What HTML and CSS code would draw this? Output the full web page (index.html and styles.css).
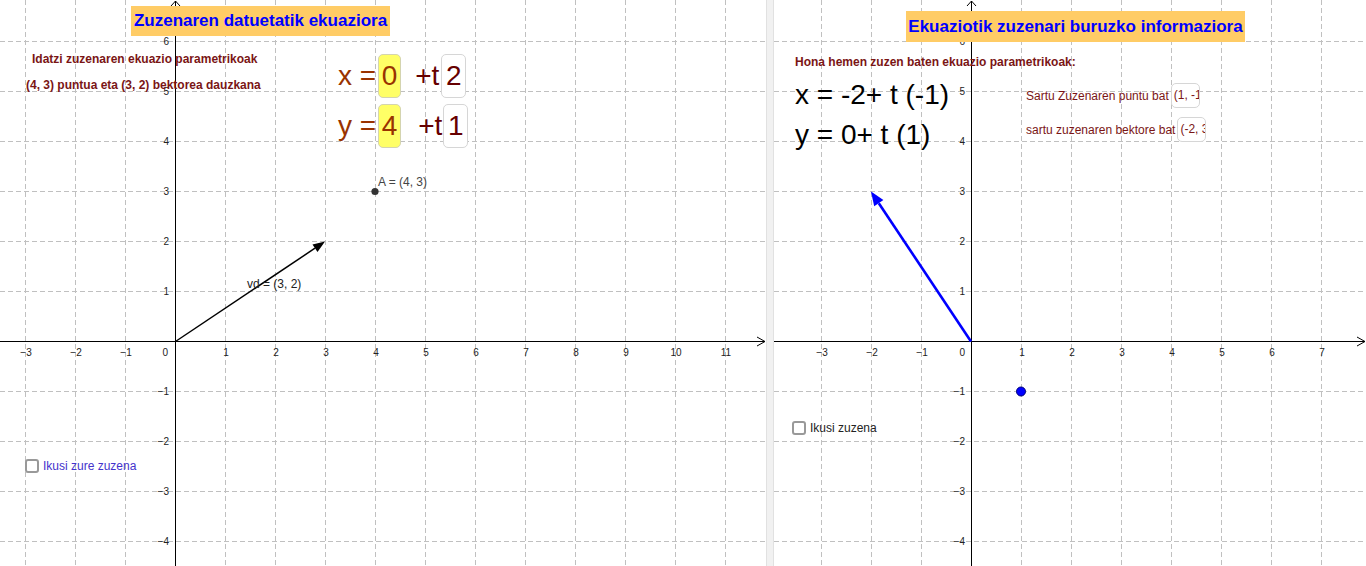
FILE: index.html
```html
<!DOCTYPE html>
<html lang="eu">
<head>
<meta charset="utf-8">
<title>Zuzenaren ekuazioak</title>
<link rel="stylesheet" href="styles.css">
</head>
<body>
<div class="app">
  <section class="panel panel-left">
    <svg class="graph" width="766" height="566" viewBox="0 0 766 566">
      <g class="grid">
        <line x1="25.5" y1="0" x2="25.5" y2="566"/>
        <line x1="75.5" y1="0" x2="75.5" y2="566"/>
        <line x1="125.5" y1="0" x2="125.5" y2="566"/>
        <line x1="225.5" y1="0" x2="225.5" y2="566"/>
        <line x1="275.5" y1="0" x2="275.5" y2="566"/>
        <line x1="325.5" y1="0" x2="325.5" y2="566"/>
        <line x1="375.5" y1="0" x2="375.5" y2="566"/>
        <line x1="425.5" y1="0" x2="425.5" y2="566"/>
        <line x1="475.5" y1="0" x2="475.5" y2="566"/>
        <line x1="525.5" y1="0" x2="525.5" y2="566"/>
        <line x1="575.5" y1="0" x2="575.5" y2="566"/>
        <line x1="625.5" y1="0" x2="625.5" y2="566"/>
        <line x1="675.5" y1="0" x2="675.5" y2="566"/>
        <line x1="725.5" y1="0" x2="725.5" y2="566"/>
        <line x1="0" y1="41.5" x2="766" y2="41.5"/>
        <line x1="0" y1="91.5" x2="766" y2="91.5"/>
        <line x1="0" y1="141.5" x2="766" y2="141.5"/>
        <line x1="0" y1="191.5" x2="766" y2="191.5"/>
        <line x1="0" y1="241.5" x2="766" y2="241.5"/>
        <line x1="0" y1="291.5" x2="766" y2="291.5"/>
        <line x1="0" y1="391.5" x2="766" y2="391.5"/>
        <line x1="0" y1="441.5" x2="766" y2="441.5"/>
        <line x1="0" y1="491.5" x2="766" y2="491.5"/>
        <line x1="0" y1="541.5" x2="766" y2="541.5"/>
      </g>
      <g class="axes">
        <line x1="0" y1="341.5" x2="765" y2="341.5"/>
        <polyline class="arrow" points="757,337 765,341.5 757,346"/>
        <line x1="175.5" y1="1" x2="175.5" y2="566"/>
        <polyline class="arrow" points="171,6 175.5,1 180,6"/>
      </g>
      <g class="ticks-x">
        <text x="26" y="356">−3</text>
        <text x="76" y="356">−2</text>
        <text x="126" y="356">−1</text>
        <text x="226" y="356">1</text>
        <text x="276" y="356">2</text>
        <text x="326" y="356">3</text>
        <text x="376" y="356">4</text>
        <text x="426" y="356">5</text>
        <text x="476" y="356">6</text>
        <text x="526" y="356">7</text>
        <text x="576" y="356">8</text>
        <text x="626" y="356">9</text>
        <text x="676" y="356">10</text>
        <text x="726" y="356">11</text>
      </g>
      <g class="ticks-y">
        <text x="168" y="356">0</text>
        <text x="169" y="45">6</text>
        <text x="169" y="95">5</text>
        <text x="169" y="145">4</text>
        <text x="169" y="195">3</text>
        <text x="169" y="245">2</text>
        <text x="169" y="295">1</text>
        <text x="169" y="395">−1</text>
        <text x="169" y="445">−2</text>
        <text x="169" y="495">−3</text>
        <text x="169" y="545">−4</text>
      </g>
      <line class="vec" x1="175.5" y1="341.5" x2="315" y2="248.2"/>
      <polygon class="vec-head" points="325,241.5 317.5,251.9 312.5,244.4"/>
      <text class="obj-label" x="247" y="288">vd = (3, 2)</text>
      <circle class="pt" cx="375" cy="191.5" r="3.6"/>
      <text class="obj-label obj-label-a" x="378" y="186">A = (4, 3)</text>
    </svg>

    <div class="title title-left">Zuzenaren datuetatik ekuaziora</div>
    <p class="note note-1">Idatzi zuzenaren ekuazio parametrikoak</p>
    <p class="note note-2">(4, 3) puntua eta (3, 2) bektorea dauzkana</p>

    <div class="eq-left">
      <div class="eq-row">
        <span class="eq-lhs">x =</span>
        <span class="box box-y">0</span>
        <span class="eq-plus">+t</span>
        <span class="box box-w">2</span>
      </div>
      <div class="eq-row eq-row-2">
        <span class="eq-lhs">y =</span>
        <span class="box box-y">4</span>
        <span class="eq-plus">+t</span>
        <span class="box box-w">1</span>
      </div>
    </div>

    <label class="check check-left"><span class="cb"></span><span class="check-text">Ikusi zure zuzena</span></label>
  </section>

  <div class="divider"></div>

  <section class="panel panel-right">
    <svg class="graph" width="592" height="566" viewBox="0 0 592 566">
      <g class="grid">
        <line x1="47.5" y1="0" x2="47.5" y2="566"/>
        <line x1="97.5" y1="0" x2="97.5" y2="566"/>
        <line x1="147.5" y1="0" x2="147.5" y2="566"/>
        <line x1="247.5" y1="0" x2="247.5" y2="566"/>
        <line x1="297.5" y1="0" x2="297.5" y2="566"/>
        <line x1="347.5" y1="0" x2="347.5" y2="566"/>
        <line x1="397.5" y1="0" x2="397.5" y2="566"/>
        <line x1="447.5" y1="0" x2="447.5" y2="566"/>
        <line x1="497.5" y1="0" x2="497.5" y2="566"/>
        <line x1="547.5" y1="0" x2="547.5" y2="566"/>
        <line x1="0" y1="41.5" x2="592" y2="41.5"/>
        <line x1="0" y1="91.5" x2="592" y2="91.5"/>
        <line x1="0" y1="141.5" x2="592" y2="141.5"/>
        <line x1="0" y1="191.5" x2="592" y2="191.5"/>
        <line x1="0" y1="241.5" x2="592" y2="241.5"/>
        <line x1="0" y1="291.5" x2="592" y2="291.5"/>
        <line x1="0" y1="391.5" x2="592" y2="391.5"/>
        <line x1="0" y1="441.5" x2="592" y2="441.5"/>
        <line x1="0" y1="491.5" x2="592" y2="491.5"/>
        <line x1="0" y1="541.5" x2="592" y2="541.5"/>
      </g>
      <g class="axes">
        <line x1="0" y1="341.5" x2="591" y2="341.5"/>
        <polyline class="arrow" points="583,337 591,341.5 583,346"/>
        <line x1="197.5" y1="1" x2="197.5" y2="566"/>
        <polyline class="arrow" points="193,6 197.5,1 202,6"/>
      </g>
      <g class="ticks-x">
        <text x="48" y="356">−3</text>
        <text x="98" y="356">−2</text>
        <text x="148" y="356">−1</text>
        <text x="248" y="356">1</text>
        <text x="298" y="356">2</text>
        <text x="348" y="356">3</text>
        <text x="398" y="356">4</text>
        <text x="448" y="356">5</text>
        <text x="498" y="356">6</text>
        <text x="548" y="356">7</text>
      </g>
      <g class="ticks-y">
        <text x="191" y="356">0</text>
        <text x="191" y="45">6</text>
        <text x="191" y="95">5</text>
        <text x="191" y="145">4</text>
        <text x="191" y="195">3</text>
        <text x="191" y="245">2</text>
        <text x="191" y="295">1</text>
        <text x="191" y="395">−1</text>
        <text x="191" y="445">−2</text>
        <text x="191" y="495">−3</text>
        <text x="191" y="545">−4</text>
      </g>
      <line class="vec-blue" x1="197" y1="341.5" x2="104.8" y2="203.2"/>
      <polygon class="vec-blue-head" points="97,191.5 109.4,200.1 100.2,206.2"/>
      <circle class="pt-blue" cx="247" cy="391.5" r="4.5"/>
    </svg>

    <div class="title title-right">Ekuaziotik zuzenari buruzko informaziora</div>
    <p class="note note-3">Hona hemen zuzen baten ekuazio parametrikoak:</p>

    <div class="eq-right">
      <div class="eq-line">x = -2+ t (-1)</div>
      <div class="eq-line">y = 0+ t (1)</div>
    </div>

    <div class="prompt-row prompt-1">
      <span class="prompt">Sartu Zuzenaren puntu bat</span>
      <span class="inbox">(1, -1)</span>
    </div>
    <div class="prompt-row prompt-2">
      <span class="prompt">sartu zuzenaren bektore bat</span>
      <span class="inbox">(-2, 3)</span>
    </div>

    <label class="check check-right"><span class="cb"></span><span class="check-text">Ikusi zuzena</span></label>
  </section>
</div>
</body>
</html>
```

FILE: styles.css
```css
html, body {
  margin: 0;
  padding: 0;
  background: #ffffff;
}

body {
  font-family: "Liberation Sans", Arial, sans-serif;
  overflow: hidden;
}

.app {
  display: flex;
  width: 1366px;
  height: 566px;
}

.panel {
  position: relative;
  height: 566px;
  overflow: hidden;
  background: #ffffff;
}

.panel-left {
  width: 766px;
  flex: 0 0 766px;
}

.panel-right {
  flex: 1 1 auto;
}

.divider {
  flex: 0 0 8px;
  box-sizing: border-box;
  background: #f1f1f1;
  border-left: 1px solid #e1e1e1;
  border-right: 1px solid #e1e1e1;
}

.graph {
  display: block;
}

.grid line {
  stroke: #c0c0c0;
  stroke-width: 1;
  stroke-dasharray: 5 3;
}

.axes line {
  stroke: #000000;
  stroke-width: 1;
}

.axes .arrow {
  fill: none;
  stroke: #000000;
  stroke-width: 1;
}

.graph text {
  font-family: "Liberation Sans", Arial, sans-serif;
  font-size: 10px;
  fill: #222222;
}

.ticks-x text {
  text-anchor: middle;
}

.ticks-y text {
  text-anchor: end;
}

.graph .obj-label {
  font-size: 12px;
  fill: #222222;
}

.graph .obj-label-a {
  fill: #444444;
}

.vec {
  stroke: #000000;
  stroke-width: 1.5;
}

.vec-head {
  fill: #000000;
}

.pt {
  fill: #333333;
}

.vec-blue {
  stroke: #0000ff;
  stroke-width: 2.6;
}

.vec-blue-head {
  fill: #0000ff;
}

.pt-blue {
  fill: #0000ff;
  stroke: #00007a;
  stroke-width: 1;
}

.title {
  position: absolute;
  background: #ffcc66;
  color: #0000ff;
  font-weight: bold;
  font-size: 17px;
  text-align: center;
  white-space: nowrap;
}

.title-left {
  left: 131px;
  top: 6px;
  width: 259px;
  height: 30px;
  line-height: 30px;
}

.title-right {
  left: 132px;
  top: 11px;
  width: 339px;
  height: 31px;
  line-height: 31px;
}

.note {
  position: absolute;
  margin: 0;
  font-size: 12px;
  font-weight: bold;
  line-height: 14px;
  color: #7a1515;
  white-space: nowrap;
}

.note-1 { left: 32px; top: 52px; }
.note-2 { left: 26px; top: 78px; }
.note-3 { left: 21px; top: 55px; }

.eq-left {
  position: absolute;
  left: 338px;
  top: 54px;
  display: flex;
  flex-direction: column;
  gap: 6px;
  font-size: 28px;
}

.eq-row {
  display: flex;
  align-items: center;
  height: 44px;
}

.eq-lhs {
  color: #993300;
  white-space: pre;
}

.eq-plus {
  color: #660000;
  margin-left: 14px;
}

.eq-row-2 .eq-plus {
  margin-left: 17px;
}

.box {
  box-sizing: border-box;
  height: 44px;
  display: flex;
  align-items: center;
  justify-content: center;
  border-radius: 5px;
}

.box-y {
  width: 23px;
  margin-left: 2px;
  background: #ffff66;
  border: 1px solid #d4d4b0;
  color: #993300;
}

.box-w {
  width: 25px;
  margin-left: 2px;
  background: #ffffff;
  border: 1px solid #d6d6d6;
  color: #660000;
}

.eq-row-2 .box-w {
  margin-left: 1px;
}

.eq-right {
  position: absolute;
  left: 21px;
  top: 75px;
  font-size: 28px;
  line-height: 40px;
  color: #000000;
  white-space: nowrap;
}

.prompt-row {
  position: absolute;
  left: 252px;
  display: flex;
  align-items: center;
  height: 25px;
}

.prompt-1 { top: 83px; }
.prompt-2 { top: 117px; }

.prompt {
  font-size: 12px;
  color: #7a1515;
  white-space: nowrap;
}

.inbox {
  box-sizing: border-box;
  width: 29px;
  height: 25px;
  margin-left: 2px;
  padding-left: 2px;
  border: 1px solid #d6d6d6;
  border-radius: 5px;
  background: #ffffff;
  overflow: hidden;
  white-space: nowrap;
  font-size: 12px;
  line-height: 23px;
  color: #7a1515;
}

.check {
  position: absolute;
  display: flex;
  align-items: center;
  gap: 4px;
  font-size: 12px;
}

.check-left { left: 25px; top: 459px; }
.check-right { left: 18px; top: 421px; }

.cb {
  box-sizing: border-box;
  width: 14px;
  height: 14px;
  border: 2px solid #999999;
  border-radius: 3px;
  background: #ffffff;
}

.check-left .check-text { color: #4433cc; }
.check-right .check-text { color: #222222; }
```
